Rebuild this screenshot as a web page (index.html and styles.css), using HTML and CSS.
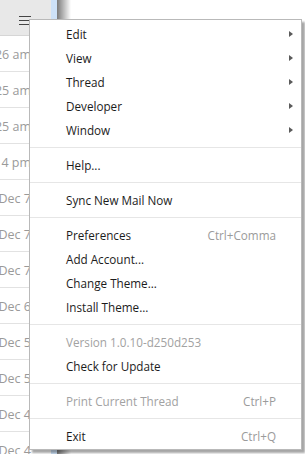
FILE: index.html
```html
<!DOCTYPE html>
<html lang="en">
  <head>
    <meta charset="UTF-8" />
    <meta name="viewport" content="width=device-width, initial-scale=1.0" />
    <title>Menu</title>
    <link rel="stylesheet" href="styles.css">
  </head>
  <body>
    <div class="app">
      <div class="sidebar">
        <div class="toolbar">
          <span class="hamburger"><i></i><i></i><i></i></span>
        </div>
        <ul class="threads">
          <li>10:26 am</li>
          <li>10:25 am</li>
          <li>10:25 am</li>
          <li>9:14 pm</li>
          <li>Dec 7</li>
          <li>Dec 7</li>
          <li>Dec 7</li>
          <li>Dec 6</li>
          <li>Dec 5</li>
          <li>Dec 5</li>
          <li>Dec 4</li>
          <li>Dec 4</li>
        </ul>
      </div>
      <div class="splitter"></div>
      <div class="shade"></div>
      <div class="content"></div>
    </div>

    <div class="menu">
      <div class="item">Edit<span class="arrow"></span></div>
      <div class="item">View<span class="arrow"></span></div>
      <div class="item">Thread<span class="arrow"></span></div>
      <div class="item">Developer<span class="arrow"></span></div>
      <div class="item">Window<span class="arrow"></span></div>
      <div class="sep"></div>
      <div class="item">Help...</div>
      <div class="sep"></div>
      <div class="item">Sync New Mail Now</div>
      <div class="sep"></div>
      <div class="item">Preferences<span class="key">Ctrl+Comma</span></div>
      <div class="item">Add Account...</div>
      <div class="item">Change Theme...</div>
      <div class="item">Install Theme...</div>
      <div class="sep"></div>
      <div class="item disabled">Version 1.0.10-d250d253</div>
      <div class="item">Check for Update</div>
      <div class="sep"></div>
      <div class="item disabled">Print Current Thread<span class="key">Ctrl+P</span></div>
      <div class="sep"></div>
      <div class="item">Exit<span class="key">Ctrl+Q</span></div>
    </div>
  </body>
</html>
```

FILE: styles.css
```css
body {
  margin: 0;
  font-family: 'Open Sans', 'Noto Sans', sans-serif;
  font-size: 11.7px;
  background-color: white;
  overflow: hidden;
}
.app {
  display: flex;
  height: 454px;
}
.sidebar {
  width: 51px;
  background-color: white;
  overflow: hidden;
}
.toolbar {
  height: 36px;
  background-color: #e8e8e8;
  border-bottom: 1px solid #d6d6d6;
  box-sizing: border-box;
  padding: 16px 0 0 19px;
}
.hamburger {
  display: flex;
  flex-direction: column;
  gap: 3px;
  width: 12px;
}
.hamburger i {
  display: block;
  height: 1px;
  background-color: #444;
}
.threads {
  list-style: none;
  margin: 0;
  padding: 0;
}
.threads li {
  display: flex;
  justify-content: flex-end;
  align-items: center;
  height: 36px;
  border-bottom: 1px solid #e2e2e2;
  box-sizing: border-box;
  padding: 2px 20px 0 0;
  font-size: 12.5px;
  color: #9a9a9a;
  white-space: nowrap;
}
.splitter {
  width: 6px;
  background-color: #cde1f7;
}
.shade {
  width: 14px;
  background: linear-gradient(to right, #7a7a7a, #ffffff);
}
.content {
  flex: 1;
}
.menu {
  position: absolute;
  left: 29px;
  top: 19px;
  width: 273px;
  box-sizing: border-box;
  padding: 2px 0 1px;
  background-color: white;
  border: 1px solid #b9b9b9;
  box-shadow: 3px 3px 2px rgba(0, 0, 0, 0.35);
}
.item {
  display: flex;
  align-items: center;
  height: 24px;
  padding: 0 25px 0 36px;
  color: #1c1c1c;
  white-space: nowrap;
}
.item.disabled {
  color: #a2a2a2;
}
.key {
  margin-left: auto;
  color: #9b9b9b;
}
.arrow {
  margin-left: auto;
  margin-right: -17px;
  width: 0;
  height: 0;
  border-top: 3px solid transparent;
  border-bottom: 3px solid transparent;
  border-left: 4px solid #5a5a5a;
}
.sep {
  height: 1px;
  margin: 5px 0;
  background-color: #e6e6e6;
}
```
